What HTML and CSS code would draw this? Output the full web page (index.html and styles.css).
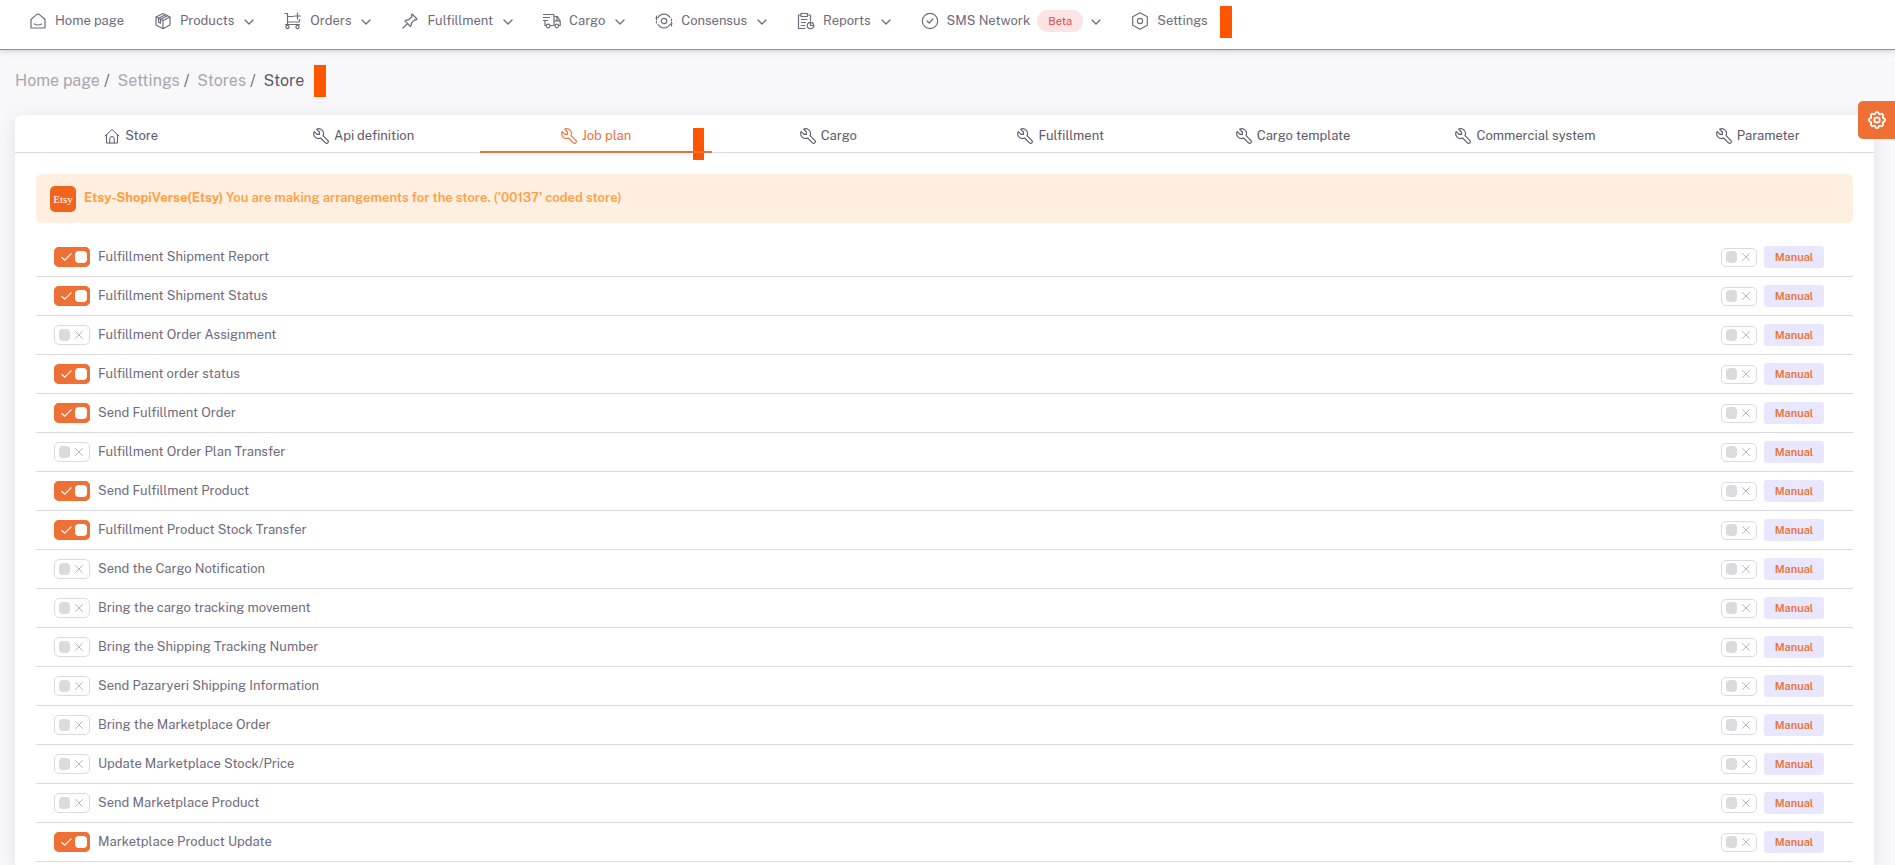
FILE: index.html
```html
<!DOCTYPE html>
<html lang="en">
<head>
<meta charset="utf-8">
<title>Store - Job plan</title>
<link rel="stylesheet" href="styles.css">
</head>
<body>
<svg class="sprite" aria-hidden="true">
  <symbol id="chev" viewBox="0 0 10 10"><path d="M1 3l4 4 4-4"/></symbol>
  <symbol id="wrench" viewBox="2 2 20 20"><path d="M7 10h3V7L6.500 3.500a6 6 0 0 1 8 8l6 6a2 2 0 0 1-3 3l-6-6a6 6 0 0 1-8-8L7 10"/></symbol>
  <symbol id="check" viewBox="0 0 12 10"><path d="M1 5.500l3.200 3L11 1.500"/></symbol>
  <symbol id="cross" viewBox="0 0 10 10"><path d="M1.500 1.500l7 7M8.500 1.500l-7 7"/></symbol>
</svg>
<nav class="nav">
  <a class="nav-item" href="#"><svg class="icon" viewBox="0 0 18 18"><path d="M2 7.500L7.500 2.600q1.500-1 3 0L16 7.500V16H2z M5.500 12q3.500 2 7 0"/></svg>Home page</a>
  <a class="nav-item" href="#"><svg class="icon" viewBox="0 0 18 18"><path d="M9 1.500l7 3.500v8l-7 3.700L2 13V5zM2 5l7 3.500L16 5M9 8.500v8M4.500 6.200l7-3.500M6.500 7.200l7-3.500M4.500 6.200v4l2 1V7.200"/></svg>Products<svg class="chev"><use href="#chev"/></svg></a>
  <a class="nav-item" href="#"><svg class="icon" viewBox="0 0 18 18"><path d="M1 1.500h2.500v11h12M3.500 4.500h6M3.500 10h11.500l.7-2.500M13.500 1v6M10.500 4h6M1.500 12.500h2"/><circle cx="3.500" cy="15" r="1.600"/><circle cx="13.500" cy="15" r="1.600"/></svg>Orders<svg class="chev"><use href="#chev"/></svg></a>
  <a class="nav-item" href="#"><svg class="icon" viewBox="0 0 18 18"><path d="M11 2l5 5-1.200 1-1-.3-3.300 3.300q.2 2-1 3.500L4 9q1.500-1.300 3.600-1L11 4.500 10.500 3zM6.500 11.500L2 16"/></svg>Fulfillment<svg class="chev"><use href="#chev"/></svg></a>
  <a class="nav-item" href="#"><svg class="icon" viewBox="0 0 18 18"><path d="M.5 2.500h10.500v11H7.500M.5 5.500h6M.5 8.500h4M2 8.500v5h1M11 4.500h3.500l2.700 4.500v4.500H16M11 8.800h6M14 4.500v4"/><circle cx="5.200" cy="14" r="1.800"/><circle cx="13.800" cy="14" r="1.800"/></svg>Cargo<svg class="chev"><use href="#chev"/></svg></a>
  <a class="nav-item" href="#"><svg class="icon" viewBox="0 0 18 18"><path d="M3 5.500a7 7 0 0 1 12 0M15 12.500a7 7 0 0 1-12 0M1.500 4v4M16.500 10v4M1.500 9.500v1.500M16.500 7v1.500M3 5.500l-2 .8M15 12.500l2-.8"/><circle cx="9" cy="9" r="2.700"/></svg>Consensus<svg class="chev"><use href="#chev"/></svg></a>
  <a class="nav-item" href="#"><svg class="icon" viewBox="0 0 18 18"><path d="M8 16.500H1.500V3H4M10.500 3H13.500v6M4 1.500h6.500V4.500H4zM4.500 7.500H10M4.500 10.500h4M4.500 13.500H7.500M13.500 10.500V13.500H16.500"/><circle cx="13.500" cy="13.500" r="3.200"/></svg>Reports<svg class="chev"><use href="#chev"/></svg></a>
  <a class="nav-item" href="#"><svg class="icon" viewBox="0 0 18 18"><circle cx="9" cy="9" r="7.700"/><path d="M6 9l2.200 2 3.800-4"/></svg>SMS Network<span class="beta">Beta</span><svg class="chev"><use href="#chev"/></svg></a>
  <a class="nav-item" href="#"><svg class="icon" viewBox="0 0 18 18"><path d="M9 .8l7.300 4v8.400L9 17.200l-7.300-4V4.800z"/><circle cx="9" cy="9" r="2.600"/></svg>Settings</a>
  <span class="marker"></span>
</nav>
<main class="page">
  <ol class="crumbs">
    <li><a href="#">Home page</a></li>
    <li><a href="#">Settings</a></li>
    <li><a href="#">Stores</a></li>
    <li>Store</li>
    <li class="crumb-mark"><span class="marker"></span></li>
  </ol>
  <section class="card">
    <div class="tabs">
      <a class="tab" href="#"><svg viewBox="0 0 16 16"><path d="M1 8l7-6.500L15 8M2.500 7v8h11V7M5.800 15v-4.500q0-2 2.200-2t2.200 2V15"/></svg>Store</a>
      <a class="tab" href="#"><svg class="tool"><use href="#wrench"/></svg>Api definition</a>
      <a class="tab active" href="#"><svg class="tool"><use href="#wrench"/></svg>Job plan<span class="marker"></span></a>
      <a class="tab" href="#"><svg class="tool"><use href="#wrench"/></svg>Cargo</a>
      <a class="tab" href="#"><svg class="tool"><use href="#wrench"/></svg>Fulfillment</a>
      <a class="tab" href="#"><svg class="tool"><use href="#wrench"/></svg>Cargo template</a>
      <a class="tab" href="#"><svg class="tool"><use href="#wrench"/></svg>Commercial system</a>
      <a class="tab" href="#"><svg class="tool"><use href="#wrench"/></svg>Parameter</a>
    </div>
    <div class="content">
      <div class="notice"><span class="etsy">Etsy</span><p><strong>Etsy-ShopiVerse(Etsy)</strong> You are making arrangements for the store. ('00137' coded store)</p></div>
      <ul class="jobs" id="jobs"></ul>
    </div>
  </section>
</main>
<button class="customize" aria-label="Customize"><svg viewBox="2 2 20 20"><path d="M10.325 4.317c.426-1.756 2.924-1.756 3.350 0a1.724 1.724 0 0 0 2.573 1.066c1.543-.94 3.310.826 2.370 2.370a1.724 1.724 0 0 0 1.065 2.572c1.756.426 1.756 2.924 0 3.350a1.724 1.724 0 0 0-1.066 2.573c.94 1.543-.826 3.310-2.370 2.370a1.724 1.724 0 0 0-2.572 1.065c-.426 1.756-2.924 1.756-3.350 0a1.724 1.724 0 0 0-2.573-1.066c-1.543.94-3.310-.826-2.370-2.370a1.724 1.724 0 0 0-1.065-2.572c-1.756-.426-1.756-2.924 0-3.350a1.724 1.724 0 0 0 1.066-2.573c-.94-1.543.826-3.310 2.370-2.370c1 .608 2.296.07 2.572-1.065z"/><circle cx="12" cy="12" r="3"/></svg></button>
<script src="jobs.js"></script>
</body>
</html>
```
FILE: styles.css
```css
* { box-sizing: border-box; }
body {
  margin: 0;
  min-height: 100vh;
  display: flex;
  flex-direction: column;
  background: #f8f8fa;
  color: #6f6b7d;
  font: 13px/20px "Public Sans", Inter, sans-serif;
}
a { color: inherit; text-decoration: none; }
svg { fill: none; stroke: currentColor; stroke-linecap: round; stroke-linejoin: round; flex: none; }
.sprite { position: absolute; width: 0; height: 0; }
.marker { width: 12px; height: 32px; background: #ff5500; flex: none; }

.nav {
  display: flex;
  align-items: center;
  gap: 30px;
  height: 50px;
  padding: 0 29px 8px;
  background: #fff;
  border-bottom: 1px solid #ee7035;
  box-shadow: 0 1px 6px rgba(75, 70, 92, .25);
}
.nav-item { display: flex; align-items: center; white-space: nowrap; }
.icon { width: 18px; height: 18px; margin-right: 8px; stroke-width: 1.2; }
.chev { width: 10px; height: 10px; margin: 2px 0 0 10px; stroke-width: 1.3; }
.beta { margin-left: 7px; padding: 0 11px; border-radius: 11px; background: #fce4e4; color: #ea5455; font-size: 11px; line-height: 22px; font-weight: 500; }
.beta + .chev { margin-left: 8px; }
.nav > .marker { margin: 2px 0 0 -18px; }

.page { flex: 1; display: flex; flex-direction: column; padding: 15px 21px 0 15px; }
.crumbs { display: flex; align-items: center; height: 32px; margin: 0 0 18px; padding: 0; list-style: none; font-size: 16px; line-height: 34px; color: #5d596c; }
.crumbs a { color: #a8a6b0; }
.crumbs a::after { content: "/"; margin: 0 8px 0 4px; color: #6f6b7d; }
.crumb-mark { display: flex; margin-left: 10px; }

.card { flex: 1; background: #fff; border-radius: 6px 6px 0 0; box-shadow: 0 4px 18px rgba(75, 70, 92, .12); }
.tabs { display: grid; grid-template-columns: repeat(8, 1fr); border-bottom: 1px solid #dbdade; }
.tab { position: relative; display: flex; align-items: center; justify-content: center; gap: 5px; height: 37px; padding-top: 4px; color: #5d596c; }
.tab svg { width: 16px; height: 16px; }
.tab .tool { stroke-width: 1.4; }
.active { color: #ee7035; }
.active::after { content: ""; position: absolute; left: 0; right: 0; bottom: -1px; height: 2px; background: #ee7035; }
.tab .marker { position: absolute; right: 8px; top: 13px; width: 11px; }

.content { padding: 21px 21px 0; }
.notice { display: flex; align-items: center; gap: 8px; height: 49px; padding: 0 14px; border-radius: 6px; background: #ffefe1; color: #ff9f43; font-weight: 600; }
.notice p { margin: 0; padding-bottom: 2px; }
.notice strong { font-weight: 700; }
.etsy { width: 26px; border-radius: 5px; background: #f1641e; color: #fff; font: 11px/26px "Liberation Serif", serif; text-align: center; }
.jobs { margin: 15px 0 0; padding: 0; list-style: none; }
.job { display: flex; align-items: center; gap: 7px; height: 39px; padding: 0 29px 0 18px; border-bottom: 1px solid #dbdade; }
.job label { flex: 1; display: flex; align-items: center; gap: 8px; }
.switch { position: relative; display: flex; align-items: center; width: 36px; height: 20px; color: #b9b7c0; }
.switch input { appearance: none; position: absolute; inset: 0; margin: 0; border: 1px solid #dbdade; border-radius: 5px; }
.switch::before { content: ""; width: 11px; height: 12px; margin: 0 4px 0 5px; border-radius: 4px; background: #dbdade; }
.switch svg { width: 10px; height: 10px; }
.switch.on { flex-direction: row-reverse; background: #ee7035; border-radius: 5px; color: #fff; }
.switch.on input { border-color: #ee7035; }
.switch.on::before { position: relative; width: 12px; margin: 0 3px; background: #fff; }
.switch.on svg { width: 11px; height: 10px; stroke-width: 1.3; }
.switch.small { height: 19px; }
.manual { width: 60px; height: 22px; padding: 0; border: 0; border-radius: 3px; background: #e9e7fd; color: #ee7035; font: 600 11px/22px "Public Sans", Inter, sans-serif; }

.customize { position: absolute; top: 101px; right: 0; width: 37px; height: 38px; display: grid; place-items: center; padding: 0; border: 0; border-radius: 5px 0 0 5px; background: #ee7035; color: #fff; }
.customize svg { width: 18px; height: 18px; stroke-width: 2; }
```
FILE: jobs.js
```js
const jobs = [
  ["Fulfillment Shipment Report", true],
  ["Fulfillment Shipment Status", true],
  ["Fulfillment Order Assignment", false],
  ["Fulfillment order status", true],
  ["Send Fulfillment Order", true],
  ["Fulfillment Order Plan Transfer", false],
  ["Send Fulfillment Product", true],
  ["Fulfillment Product Stock Transfer", true],
  ["Send the Cargo Notification", false],
  ["Bring the cargo tracking movement", false],
  ["Bring the Shipping Tracking Number", false],
  ["Send Pazaryeri Shipping Information", false],
  ["Bring the Marketplace Order", false],
  ["Update Marketplace Stock/Price", false],
  ["Send Marketplace Product", false],
  ["Marketplace Product Update", true]
];
document.getElementById("jobs").innerHTML = jobs.map(([name, on]) => `
  <li class="job">
    <label><span class="switch ${on ? "on" : ""}"><input type="checkbox" ${on ? "checked" : ""}><svg><use href="#${on ? "check" : "cross"}"/></svg></span>${name}</label>
    <span class="switch small"><input type="checkbox" aria-label="${name} manual mode"><svg><use href="#cross"/></svg></span>
    <button class="manual">Manual</button>
  </li>`).join("");
```
